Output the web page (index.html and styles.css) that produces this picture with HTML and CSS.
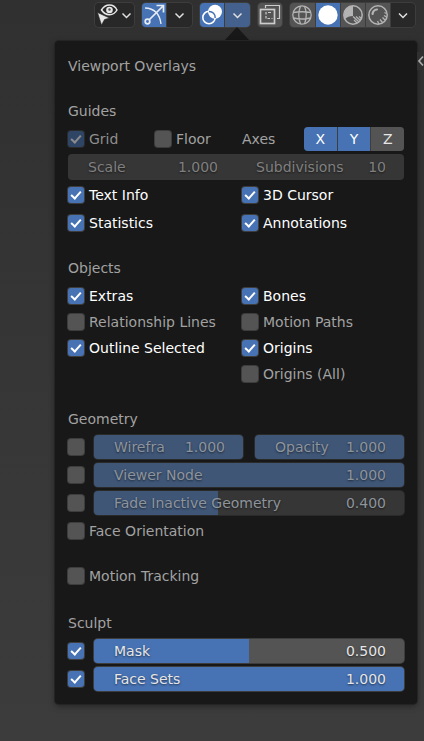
FILE: index.html
```html
<!DOCTYPE html>
<html lang="en">
<head>
<meta charset="utf-8">
<title>Viewport Overlays</title>
<meta name="viewport" content="width=device-width, initial-scale=1">
<link rel="stylesheet" href="styles.css">
</head>
<body>
<header class="toolbar">
  <div class="group dark">
    <button class="tool wide" aria-label="Object visibility">
      <svg width="39" height="24" viewBox="0 0 39 24"><path d="M6.500 7Q9.500 2 14.500 2T22 7Q19.500 11.500 14.500 11.700Q9.500 11.500 6.500 7Z" fill="none" stroke="#e6e6e6" stroke-width="1.500"/><circle cx="14.500" cy="7" r="3.300" fill="#e6e6e6"/><circle cx="14.500" cy="6.500" r="1.200" fill="#555"/><path d="M2.500 9.500L14.500 15L9.500 16.500L6.500 22Z" fill="#e6e6e6" stroke="#282828" stroke-width="0.600"/><path class="chev" d="M27.500 10.500l4 4 4-4"/></svg>
    </button>
  </div>
  <div class="group">
    <button class="tool on" aria-label="Show gizmo">
      <svg width="24" height="24" viewBox="0 0 24 24"><path d="M3 5Q17 5.500 19 21" fill="none" stroke="#e8edf5" stroke-width="1.400"/><path d="M7.500 16.500L20.500 3.500M14.500 2.500H21.500V9.500" fill="none" stroke="#e8edf5" stroke-width="1.700"/><circle cx="5.500" cy="18.500" r="2.300" fill="none" stroke="#e8edf5" stroke-width="1.700"/></svg>
    </button>
    <button class="tool dark" aria-label="Gizmo options"><svg width="25" height="24" viewBox="0 0 25 24"><path class="chev" d="M8.500 10.500l4 4 4-4"/></svg></button>
  </div>
  <div class="group">
    <button class="tool on" aria-label="Show overlays">
      <svg width="24" height="24" viewBox="0 0 24 24"><circle cx="15" cy="8.700" r="7" fill="#fff"/><circle cx="9" cy="14.500" r="6.200" fill="none" stroke="#fff" stroke-width="1.600"/><path d="M9 8.500A6 6 0 0 1 15.200 15" fill="none" stroke="#4772b3" stroke-width="1.500"/></svg>
    </button>
    <button class="tool open" aria-label="Overlay options" aria-expanded="true"><svg width="25" height="24" viewBox="0 0 25 24"><path class="chev" d="M8.500 10.500l4 4 4-4"/></svg></button>
  </div>
  <div class="group">
    <button class="tool" aria-label="Toggle X-ray">
      <svg width="24" height="24" viewBox="0 0 24 24" fill="none" stroke="#ccc" stroke-width="1.200"><path d="M7.500 5V2.500H21.500V15.500H19"/><rect x="2.500" y="6.500" width="14" height="14" stroke-width="1.700"/><path d="M8 9v6.500h6.500" stroke-dasharray="2.500 1.500"/><path d="M10 9.500h3"/></svg>
    </button>
  </div>
  <div class="group shading">
    <button class="tool" aria-label="Wireframe">
      <svg width="24" height="24" viewBox="0 0 24 24" fill="none" stroke="#b4b4b4" stroke-width="1.300"><circle cx="12" cy="12" r="9.200"/><path d="M10.500 3Q7 12 10.500 21M14.500 3Q18 12 14.500 21M3 9.500Q12 8 21 9.500M3.500 15Q12 17 20.500 15"/></svg>
    </button>
    <button class="tool on" aria-label="Solid">
      <svg width="24" height="24" viewBox="0 0 24 24"><circle cx="12" cy="12" r="9.700" fill="#fff"/></svg>
    </button>
    <button class="tool" aria-label="Material preview">
      <svg width="24" height="24" viewBox="0 0 24 24"><circle cx="12" cy="12" r="9.200" fill="none" stroke="#b4b4b4" stroke-width="1.500"/><path d="M12 3A9 9 0 0 0 4 16Q7 13 12 13Z" fill="#b4b4b4"/><path d="M12 13.500l6 5.500M15 13.500l4.500 4M18 13.500l2.500 2M13 17l3 3" stroke="#b4b4b4" stroke-width="1.300"/></svg>
    </button>
    <button class="tool" aria-label="Rendered">
      <svg width="24" height="24" viewBox="0 0 24 24" fill="none" stroke="#b4b4b4"><circle cx="12" cy="12" r="9.200" stroke-width="1.500"/><path d="M6.500 11Q7 7 11 6.500" stroke-width="2.200" stroke-linecap="round"/><path d="M18.500 9.500l2 1M18 12.500l2.500 1.500M16.500 14.500l2.500 2.500M14 16.500l2.500 3M11.500 18l1.500 3" stroke-width="1.300"/></svg>
    </button>
    <button class="tool dark" aria-label="Shading options"><svg width="24" height="24" viewBox="0 0 24 24"><path class="chev" d="M8 10.500l4 4 4-4"/></svg></button>
  </div>
</header>
<main class="viewport">
  <button class="side" aria-label="Show sidebar"><svg width="7" height="18" viewBox="0 0 7 18"><path d="M6 4.500L2 9l4 4.500" fill="none" stroke="#aaa" stroke-width="1.700"/></svg></button>
  <div class="panel">
    <h1 class="row head">Viewport Overlays</h1>
    <section>
      <h2 class="row head">Guides</h2>
      <div class="row cols">
        <div class="cols options">
          <label class="check dim"><input type="checkbox" checked>Grid</label>
          <label class="check off"><input type="checkbox">Floor</label>
        </div>
        <div class="axes"><span>Axes</span>
          <div class="toggles"><button class="on">X</button><button class="on">Y</button><button>Z</button></div>
        </div>
      </div>
      <div class="row cols joined">
        <label class="field">Scale<input class="num" value="1.000"></label>
        <label class="field">Subdivisions<input class="num" value="10"></label>
      </div>
      <div class="row cols gapped">
        <label class="check"><input type="checkbox" checked>Text Info</label>
        <label class="check"><input type="checkbox" checked>3D Cursor</label>
      </div>
      <div class="row cols gapped">
        <label class="check"><input type="checkbox" checked>Statistics</label>
        <label class="check"><input type="checkbox" checked>Annotations</label>
      </div>
    </section>
    <section>
      <h2 class="row head">Objects</h2>
      <div class="cols gapped">
        <div>
          <label class="check"><input type="checkbox" checked>Extras</label>
          <label class="check off"><input type="checkbox">Relationship Lines</label>
          <label class="check"><input type="checkbox" checked>Outline Selected</label>
        </div>
        <div>
          <label class="check"><input type="checkbox" checked>Bones</label>
          <label class="check off"><input type="checkbox">Motion Paths</label>
          <label class="check"><input type="checkbox" checked>Origins</label>
          <label class="check off"><input type="checkbox">Origins (All)</label>
        </div>
      </div>
    </section>
    <section>
      <h2 class="row head">Geometry</h2>
      <div class="row line">
        <input type="checkbox" aria-label="Use wireframe">
        <div class="cols spaced">
          <label class="field faint"><span class="fill"></span><span class="name">Wirefra</span><input class="num" value="1.000"></label>
          <label class="field faint"><span class="fill"></span><span class="name">Opacity</span><input class="num" value="1.000"></label>
        </div>
      </div>
      <div class="row line">
        <input type="checkbox" aria-label="Use viewer node">
        <label class="field faint"><span class="fill"></span><span class="name">Viewer Node</span><input class="num" value="1.000"></label>
      </div>
      <div class="row line">
        <input type="checkbox" aria-label="Use fade inactive geometry">
        <label class="field faint"><span class="fill" style="width:40%"></span><span class="name">Fade Inactive Geometry</span><input class="num" value="0.400"></label>
      </div>
      <label class="row check off"><input type="checkbox">Face Orientation</label>
    </section>
    <section>
      <label class="row check off"><input type="checkbox">Motion Tracking</label>
    </section>
    <section>
      <h2 class="row head">Sculpt</h2>
      <div class="row line">
        <input type="checkbox" aria-label="Use mask" checked>
        <label class="field"><span class="fill" style="width:50%"></span><span class="name">Mask</span><input class="num" value="0.500"></label>
      </div>
      <div class="row line">
        <input type="checkbox" aria-label="Use face sets" checked>
        <label class="field"><span class="fill"></span><span class="name">Face Sets</span><input class="num" value="1.000"></label>
      </div>
    </section>
  </div>
</main>
</body>
</html>
```
FILE: styles.css
```css
*, *::before, *::after { box-sizing: border-box; }
html { min-height: 100%; background: linear-gradient(#303030, #3c3c3c); }
body {
  margin: 0;
  font-family: "DejaVu Sans", sans-serif;
  font-size: 14px;
  line-height: 26px;
  color: #a2a2a2;
}
button, input { font: inherit; margin: 0; padding: 0; border: 0; color: inherit; }
svg { display: block; }

.toolbar {
  display: flex;
  justify-content: flex-end;
  gap: 8px;
  padding: 3px 9px 0 0;
}
.group {
  display: flex;
  gap: 1px;
  border-radius: 4px;
  background: #3d3d3d;
  box-shadow: 0 0 0 1px #3d3d3d;
}
.shading { gap: 0; }
.tool { width: 24px; height: 24px; background: #545454; overflow: hidden; }
.shading .tool { width: 25px; }
.shading .tool + .tool { border-left: 1px solid #3d3d3d; }
.tool.wide { width: 39px; }
.group.dark .tool, .tool.dark { background: #282828; }
.tool.dark, .tool.open { width: 25px; }
.tool.on { background: #4772b3; }
.tool.open { position: relative; overflow: visible; background: #44608c; }
.tool.open::after {
  content: "";
  position: absolute;
  left: -1px;
  top: 24px;
  border: 13px solid transparent;
  border-top: 0;
  border-bottom: 14px solid #181818;
}
.tool:first-child { border-radius: 4px 0 0 4px; }
.tool:last-child { border-radius: 0 4px 4px 0; }
.tool:only-child { border-radius: 4px; }
.chev { fill: none; stroke: #e0e0e0; stroke-width: 1.5px; }

.viewport { position: relative; padding: 14px 7px 36px 55px; }
.side {
  position: absolute;
  right: 0;
  top: 25px;
  height: 18px;
  background: #303030;
}
.panel {
  padding: 12px 13px;
  background: #181818;
  border-radius: 4px;
  box-shadow: 0 0 0 1px #242424, 0 2px 6px #0006;
}
h1, h2 { margin: 0; font-size: 14px; font-weight: 400; }
section { margin-top: 19px; }
section:last-child { margin-top: 21px; }
.row + .row, .row + .cols { margin-top: 2px; }
.row { height: 26px; }

.cols { display: grid; grid-template-columns: minmax(0, 1fr) minmax(0, 1fr); }
.gapped { column-gap: 12px; }
.options { column-gap: 6px; }
.spaced { flex: 1; column-gap: 12px; }

.check { display: flex; align-items: center; gap: 5px; height: 26px; color: #fff; white-space: nowrap; }
.check.off { color: #a2a2a2; }
.check.dim { color: #8e8e8e; }
input[type="checkbox"] {
  appearance: none;
  flex: none;
  width: 16px;
  height: 16px;
  border-radius: 3px;
  background: #545454;
  box-shadow: 0 0 0 1px #3d3d3d;
}
input[type="checkbox"]:checked { background: #4772b3; }
input[type="checkbox"]:checked::before {
  content: "";
  display: block;
  width: 10px;
  height: 6px;
  margin: 4px 3px;
  border: solid #fff;
  border-width: 0 0 2px 2px;
  transform: rotate(-48deg);
}
.dim input { opacity: 0.5; }

.axes { display: flex; align-items: center; justify-content: space-between; padding-left: 6px; }
.toggles {
  display: flex;
  gap: 1px;
  width: 100px;
  height: 24px;
  border-radius: 4px;
  overflow: hidden;
  background: #3d3d3d;
}
.toggles button { flex: 1; background: #545454; color: #e6e6e6; line-height: 24px; }
.toggles .on { background: #4772b3; color: #fff; }

.line { display: flex; align-items: center; gap: 10px; }
.field {
  position: relative;
  flex: 1;
  display: flex;
  align-items: center;
  justify-content: space-between;
  min-width: 0;
  height: 24px;
  padding: 0 18px 0 20px;
  border-radius: 4px;
  overflow: hidden;
  background: #545454;
  color: #e6e6e6;
  white-space: nowrap;
  text-shadow: 0 1px 2px #0008;
}
.line .field { box-shadow: 0 0 0 1px #3d3d3d; }
.fill { position: absolute; inset: 0 auto 0 0; width: 100%; background: #4772b3; }
.name { position: relative; }
.num {
  position: relative;
  flex: none;
  width: 42px;
  background: none;
  text-align: right;
  text-shadow: inherit;
}
.line .faint { background: #363636; color: #8e949c; box-shadow: 0 0 0 1px #2a2a2a; }
.faint .fill { background: #3f5677; }
.joined { border-radius: 4px; background: #363636; align-items: center; }
.joined .field { background: none; color: #808080; }
```
